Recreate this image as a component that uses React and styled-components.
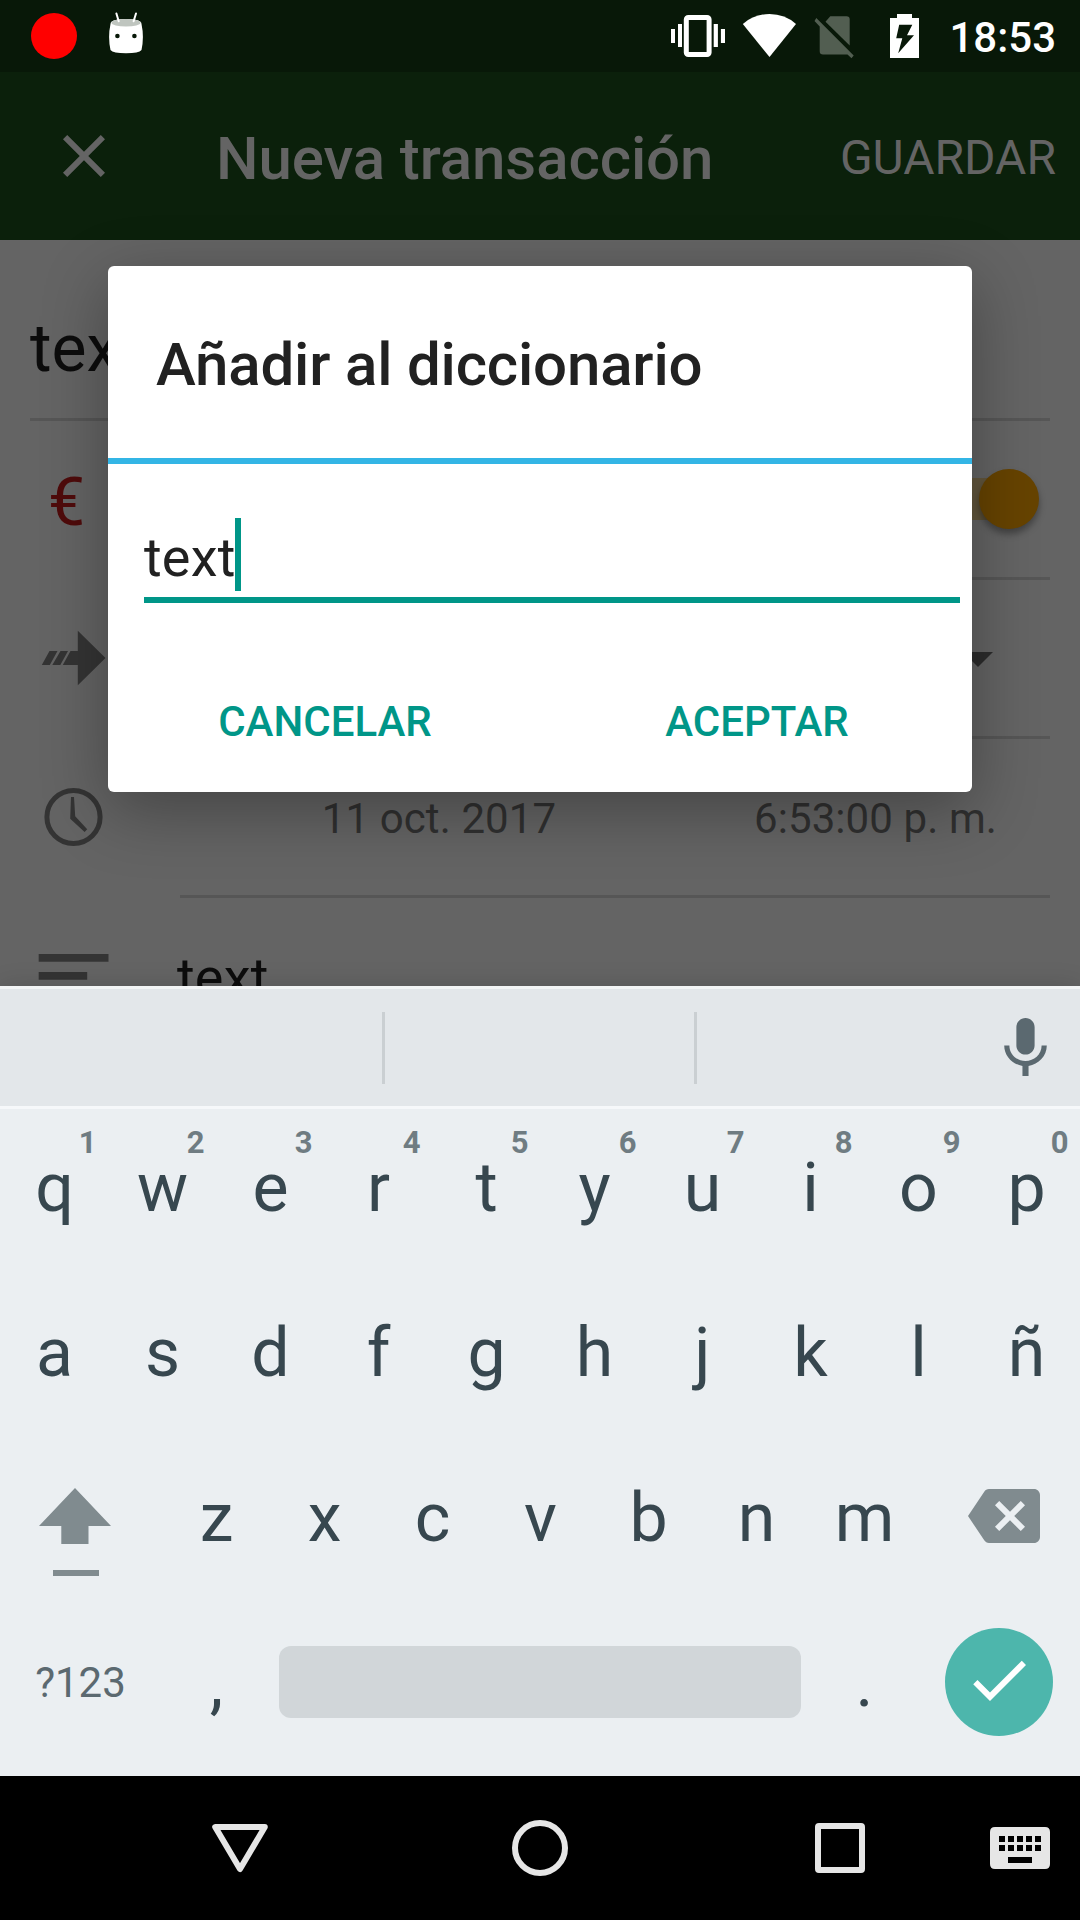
import React from 'react';
import styled, { createGlobalStyle } from 'styled-components';

const GlobalStyle = createGlobalStyle`
  *, *::before, *::after { box-sizing: border-box; }
  body { margin: 0; background: #000; }
`;

const Screen = styled.div`
  position: relative;
  display: flex;
  flex-direction: column;
  width: 1080px;
  height: 1920px;
  overflow: hidden;
  background: #646464;
  font-family: Roboto, "Noto Sans", sans-serif;
  white-space: nowrap;
`;

const Icon = styled.svg`
  display: block;
  flex: none;
  width: ${(p) => p.$w}px;
  height: ${(p) => p.$h}px;
  margin-left: ${(p) => p.$ml || 0}px;
  margin-right: ${(p) => p.$mr || 0}px;
  margin-top: ${(p) => p.$mt || 0}px;
  fill: ${(p) => p.$color || '#fff'};
`;

/* ---- Status bar ---- */
const StatusBar = styled.header`
  display: flex;
  flex: none;
  height: 72px;
  padding: 0 24px 0 31px;
  align-items: flex-start;
  background: #081808;
`;

const RecordDot = styled.span`
  width: 46px;
  height: 46px;
  margin-top: 13px;
  border-radius: 50%;
  background: #f00;
`;

const Spacer = styled.div`
  flex: 1;
`;

const Clock = styled.span`
  width: 136px;
  padding-top: 4px;
  text-align: right;
  color: #fff;
  font-size: 42px;
  font-weight: 500;
  line-height: 68px;
`;

/* ---- App bar ---- */
const AppBar = styled.div`
  display: flex;
  flex: none;
  align-items: center;
  height: 168px;
  padding: 0 24px 0 48px;
  background: #0b200b;
  color: #646464;
`;

const AppTitle = styled.h1`
  flex: 1;
  margin: 0 0 0 96px;
  padding-top: 5px;
  font-size: 60px;
  font-weight: 500;
  line-height: 72px;
  letter-spacing: -0.08px;
`;

const SaveButton = styled.button`
  padding: 3px 0 0;
  border: 0;
  background: none;
  color: inherit;
  font: 400 48px/60px Roboto, sans-serif;
`;

/* ---- Form behind the dialog ---- */
const Form = styled.main`
  display: flex;
  flex: 1;
  flex-direction: column;
  min-height: 0;
  overflow: hidden;
  padding: 0 30px;
`;

const TitleField = styled.div`
  flex: none;
  height: 181px;
  padding-top: 69px;
  border-bottom: 3px solid #565656;
  color: #0c0c0c;
  font-size: 66px;
  line-height: 80px;
`;

const FormRow = styled.div`
  display: flex;
  flex: none;
  height: 159px;
`;

const Lead = styled.div`
  flex: none;
  width: 150px;
`;

const RowBody = styled.div`
  display: flex;
  flex: 1;
  border-bottom: 3px solid #565656;
`;

const Euro = styled.span`
  display: block;
  padding: 42px 0 0 18px;
  color: #4f0b0b;
  font-size: 66px;
  line-height: 80px;
`;

const Track = styled.div`
  display: flex;
  justify-content: flex-end;
  align-items: center;
  width: 96px;
  height: 42px;
  margin: 57px 20px 0 auto;
  border-radius: 21px;
  background: #64583e;
`;

const Thumb = styled.span`
  flex: none;
  width: 60px;
  height: 60px;
  margin: 0 -9px 1px 0;
  border-radius: 50%;
  background: #664300;
  box-shadow: 0 5px 7px rgba(0, 0, 0, 0.35);
`;

const Caret = styled.span`
  width: 0;
  height: 0;
  margin: 72px 57px 0 auto;
  border-top: 15px solid #2c2c2c;
  border-left: 15px solid transparent;
  border-right: 15px solid transparent;
`;

const When = styled.div`
  flex: none;
  width: ${(p) => p.$w}px;
  padding: 50px 0 0 ${(p) => p.$indent || 0}px;
  text-align: center;
  color: #303030;
  font-size: 42px;
  line-height: 60px;
  letter-spacing: 0.1px;
`;

const Note = styled.div`
  margin-left: -3px;
  padding-top: 50px;
  color: #0c0c0c;
  font-size: 54px;
  line-height: 60px;
  letter-spacing: 0.2px;
`;

/* ---- Dialog ---- */
const Dialog = styled.section`
  position: absolute;
  top: 266px;
  left: 108px;
  display: flex;
  flex-direction: column;
  width: 864px;
  height: 526px;
  border-radius: 6px;
  background: #fff;
  box-shadow: 0 18px 66px rgba(0, 0, 0, 0.32);
  color: #212121;
`;

const DialogTitle = styled.h2`
  flex: none;
  height: 198px;
  margin: 0;
  padding: 63px 48px 0;
  border-bottom: 6px solid #33b5e5;
  font-size: 60px;
  font-weight: 500;
  line-height: 72px;
  letter-spacing: -0.18px;
`;

const Input = styled.div`
  display: flex;
  flex: none;
  height: 139px;
  margin: 0 12px 0 36px;
  padding-top: 54px;
  border-bottom: 6px solid #009688;
  font-size: 54px;
  line-height: 80px;
  letter-spacing: 0.2px;
`;

const Cursor = styled.span`
  width: 6px;
  height: 73px;
  margin-left: -1px;
  background: #009688;
`;

const Actions = styled.div`
  display: flex;
  flex: 1;
  align-items: flex-start;
  padding-top: 89px;
`;

const Action = styled.button`
  flex: 1;
  padding: 0 0 0 2px;
  border: 0;
  background: none;
  color: #009688;
  font: 500 42px/60px Roboto, sans-serif;
`;

/* ---- Keyboard ---- */
const Keyboard = styled.section`
  position: relative;
  display: flex;
  flex: none;
  flex-direction: column;
  height: 790px;
  background: #ebeff2;
  box-shadow: 0 0 24px rgba(0, 0, 0, 0.14);
`;

const Suggestions = styled.div`
  display: flex;
  flex: none;
  height: 123px;
  border-top: 3px solid #f3f5f6;
  border-bottom: 3px solid #f6f8fa;
  background: #e3e7ea;
`;

const Suggestion = styled.div`
  width: ${(p) => p.$w}px;
  height: 72px;
  margin-top: 23px;
  border-right: 3px solid #cacfd2;
`;

const KeyRow = styled.div`
  display: flex;
  flex: none;
  height: ${(p) => p.$h || 165}px;
`;

const Key = styled.div`
  position: relative;
  display: flex;
  flex: none;
  flex-direction: column;
  justify-content: flex-end;
  align-items: center;
  width: ${(p) => p.$w || 108}px;
  padding: 0 0 48px 1px;
  color: #37474f;
  font-size: 68px;
  line-height: 68px;
`;

const Hint = styled.span`
  position: absolute;
  right: 11.5px;
  bottom: 112px;
  color: #6f7c82;
  font-size: 31px;
  font-weight: 700;
  line-height: 30px;
`;

const SymbolKey = styled(Key)`
  padding: 0 1px 61px 0;
  color: #5b6970;
  font-size: 42px;
  line-height: 42px;
`;

const IconKey = styled.div`
  display: flex;
  flex: none;
  width: 162px;
`;

const SpaceBar = styled.div`
  flex: none;
  width: 522px;
  height: 72px;
  margin: 46px 9px 0;
  border-radius: 12px;
  background: #d1d6d9;
`;

const Enter = styled.div`
  display: flex;
  align-items: center;
  justify-content: center;
  width: 108px;
  height: 108px;
  margin: 28px 0 0 27px;
  padding-bottom: 4px;
  border-radius: 50%;
  background: #4db6ac;
`;

/* ---- Navigation bar ---- */
const NavBar = styled.nav`
  display: flex;
  flex: none;
  align-items: center;
  height: 144px;
  background: #000;
`;

const topKeys = [...'qwertyuiop'];
const homeKeys = [...'asdfghjklñ'];
const lowKeys = [...'zxcvbnm'];

export default function App() {
  return (
    <Screen>
      <GlobalStyle />
      <StatusBar>
        <RecordDot />
        <Icon viewBox="108 12 36 42" $w={36} $h={42} $ml={31} $mt={12}>
          <path d="M110.500 24 Q110.500 19 126 19 Q141.500 19 141.500 24 Q144.300 37 141.500 50 Q139 53.200 126 53.200 Q113 53.200 110.500 50 Q107.700 37 110.500 24 Z" />
          <ellipse cx="126" cy="22.700" rx="14.600" ry="3.800" fill="#bfc5bf" />
          <path d="M116.400 13.500 L118.700 21.300 M136 13.500 L133.600 21.300" stroke="#fff" strokeWidth="2" strokeLinecap="round" />
          <circle cx="117.400" cy="36" r="2.300" fill="#081808" />
          <circle cx="134.400" cy="36" r="2.300" fill="#081808" />
        </Icon>
        <Spacer />
        <Icon viewBox="670 12 56 48" $w={56} $h={48} $mt={12}>
          <rect x="686.300" y="17.500" width="22.800" height="37" rx="2" fill="none" stroke="#fff" strokeWidth="5" />
          <path d="M671 29h4v14h-4zM678 24h4v23h-4zM713.700 24h4.200v23h-4.200zM720.900 29h4.100v14h-4.100z" />
        </Icon>
        <Icon viewBox="742 12 55 48" $w={55} $h={48} $ml={16} $mt={12}>
          <path d="M769.500 57 L742.800 24 Q754 14 769.500 14 Q785 14 796 24 Z" />
        </Icon>
        <Icon viewBox="814 12 41 48" $w={41} $h={48} $ml={17} $mt={12} $color="#525e51">
          <path d="M825.500 21.800 L830.300 16.200 H846.500 Q849.700 16.200 849.700 19.400 V45.500 Z" />
          <path d="M816.300 18 L853.700 55.500 L851.500 58.200 L847.500 54.500 H823 Q819.700 54.500 819.700 51.300 V26.500 L814.500 21 Z" />
        </Icon>
        <Icon viewBox="889 12 31 48" $w={31} $h={48} $ml={34} $mt={12}>
          <path fillRule="evenodd" d="M890 18 H897 V14 H912 V18 H919 V58 H890 Z M899.200 24.700 L896.200 38.300 H902.300 L898.200 53.300 L914 35.300 H907 L912.300 24.700 Z" />
        </Icon>
        <Clock>18:53</Clock>
      </StatusBar>

      <AppBar>
        <Icon viewBox="0 0 24 24" $w={72} $h={72} $color="#646464">
          <path d="M19 6.410L17.590 5 12 10.590 6.410 5 5 6.410 10.590 12 5 17.590 6.410 19 12 13.410 17.590 19 19 17.590 13.410 12z" />
        </Icon>
        <AppTitle>Nueva transacción</AppTitle>
        <SaveButton>GUARDAR</SaveButton>
      </AppBar>

      <Form>
        <TitleField>text</TitleField>
        <FormRow>
          <Lead>
            <Euro>€</Euro>
          </Lead>
          <RowBody>
            <Track>
              <Thumb />
            </Track>
          </RowBody>
        </FormRow>
        <FormRow>
          <Lead>
            <Icon viewBox="41 630 66 56" $w={66} $h={56} $ml={11} $mt={50} $color="#343434">
              <path d="M77.800 630.700 L105.500 658 L77.800 685.300 V665 H62.800 L70.500 651 H77.800 Z M49.500 651 H57.500 L49.800 665 H41.800 Z M60.500 651 H68 L60.300 665 H52.300 Z" />
            </Icon>
          </Lead>
          <RowBody>
            <Caret />
          </RowBody>
        </FormRow>
        <FormRow>
          <Lead>
            <Icon viewBox="44 787 60 60" $w={60} $h={60} $ml={14} $mt={48} $color="#343434">
              <circle cx="73.500" cy="817" r="26.600" fill="none" stroke="#343434" strokeWidth="5" />
              <path d="M71 797 H74 L75.200 816.200 L87.200 829.200 L84.600 832 L70.200 818.800 Z" />
            </Icon>
          </Lead>
          <RowBody>
            <When $w={518}>11 oct. 2017</When>
            <When $w={352} $indent={3}>6:53:00 p. m.</When>
          </RowBody>
        </FormRow>
        <FormRow>
          <Lead>
            <Icon viewBox="38 953 72 45" $w={72} $h={45} $ml={8} $mt={55} $color="#343434">
              <path d="M38.700 954h69.800v7.700h-69.800zM38.700 972h48.500v7.700h-48.500zM38.700 990h69.800v7.700h-69.800z" />
            </Icon>
          </Lead>
          <Note>text</Note>
        </FormRow>
      </Form>

      <Dialog>
        <DialogTitle>Añadir al diccionario</DialogTitle>
        <Input>
          text
          <Cursor />
        </Input>
        <Actions>
          <Action>CANCELAR</Action>
          <Action>ACEPTAR</Action>
        </Actions>
      </Dialog>

      <Keyboard>
        <Suggestions>
          <Suggestion $w={385} />
          <Suggestion $w={312} />
          <Spacer />
          <Icon viewBox="0 0 24 24" $w={73} $h={73} $mt={23} $mr={18} $color="#5b6970">
            <path d="M12 14c1.660 0 2.990-1.340 2.990-3L15 5c0-1.660-1.340-3-3-3S9 3.340 9 5v6c0 1.660 1.340 3 3 3zm5.300-3c0 3-2.540 5.100-5.300 5.100S6.700 14 6.700 11H5c0 3.410 2.720 6.230 6 6.720V21h2v-3.280c3.280-.48 6-3.300 6-6.720h-1.700z" />
          </Icon>
        </Suggestions>
        <KeyRow $h={161}>
          {topKeys.map((k, i) => (
            <Key key={k}>
              <Hint>{(i + 1) % 10}</Hint>
              {k}
            </Key>
          ))}
        </KeyRow>
        <KeyRow>
          {homeKeys.map((k) => (
            <Key key={k}>{k}</Key>
          ))}
        </KeyRow>
        <KeyRow>
          <IconKey>
            <Icon viewBox="38 1487 74 90" $w={74} $h={90} $ml={38} $mt={52} $color="#808b8f">
              <path d="M75 1488 L111 1526 H88.500 V1544 H61.300 V1526 H39 Z M53 1570h46v6h-46z" />
            </Icon>
          </IconKey>
          {lowKeys.map((k) => (
            <Key key={k}>{k}</Key>
          ))}
          <IconKey>
            <Icon viewBox="0 0 24 24" $w={72} $h={72} $ml={50} $mt={45} $color="#808b8f">
              <path d="M22 3H7c-.69 0-1.230.35-1.590.88L0 12l5.410 8.110c.36.53.9.89 1.590.89h15c1.100 0 2-.9 2-2V5c0-1.100-.9-2-2-2zm-3 12.590L17.590 17 14 13.410 10.410 17 9 15.590 12.590 12 9 8.410 10.410 7 14 10.590 17.590 7 19 8.410 15.410 12 19 15.590z" />
            </Icon>
          </IconKey>
        </KeyRow>
        <KeyRow>
          <SymbolKey $w={162}>?123</SymbolKey>
          <Key>,</Key>
          <SpaceBar />
          <Key>.</Key>
          <Enter>
            <Icon viewBox="0 0 24 24" $w={72} $h={72}>
              <path d="M9 16.170L4.830 12l-1.420 1.410L9 19 21 7l-1.410-1.410z" />
            </Icon>
          </Enter>
        </KeyRow>
      </Keyboard>

      <NavBar>
        <Icon viewBox="210 1818 60 60" $w={60} $h={60} $ml={210}>
          <path d="M215.200 1827 H264.800 L240 1869 Z" fill="none" stroke="#e6e6e6" strokeWidth="6" strokeLinejoin="round" />
        </Icon>
        <Icon viewBox="510 1818 60 60" $w={60} $h={60} $ml={240}>
          <circle cx="540" cy="1848" r="25" fill="none" stroke="#e6e6e6" strokeWidth="6" />
        </Icon>
        <Icon viewBox="810 1818 60 60" $w={60} $h={60} $ml={240}>
          <rect x="818" y="1826" width="44" height="44" rx="1" fill="none" stroke="#e6e6e6" strokeWidth="6" />
        </Icon>
        <Icon viewBox="990 1818 60 60" $w={60} $h={60} $ml={120} $color="#e6e6e6">
          <path fillRule="evenodd" d="M995 1827h50q5 0 5 5v32q0 5-5 5h-50q-5 0-5-5v-32q0-5 5-5z M999 1836v6h6v-6z M1008 1836v6h6v-6z M1017 1836v6h6v-6z M1026 1836v6h6v-6z M1035 1836v6h6v-6z M999 1845v6h6v-6z M1008 1845v6h6v-6z M1017 1845v6h6v-6z M1026 1845v6h6v-6z M1035 1845v6h6v-6z M1008 1857v6h24v-6z" />
        </Icon>
      </NavBar>
    </Screen>
  );
}
